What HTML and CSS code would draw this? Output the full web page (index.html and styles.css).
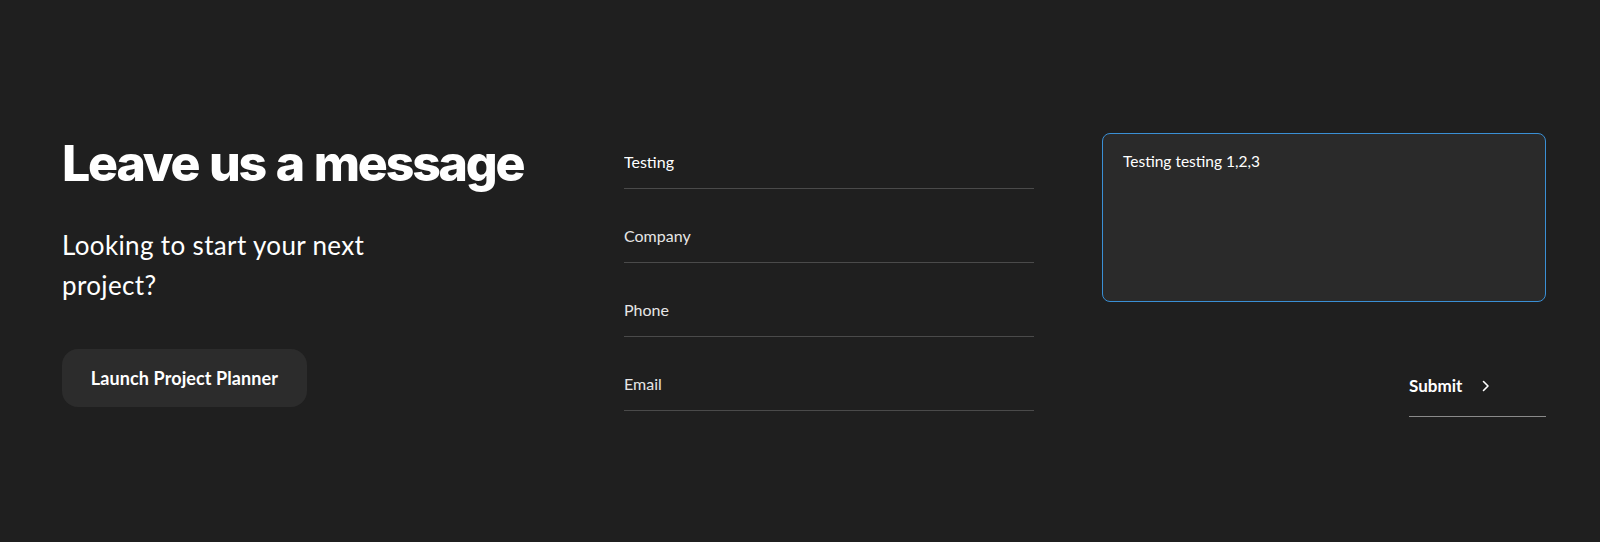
FILE: index.html
```
<!DOCTYPE html>
<html lang="en">
<head>
    <meta charset="UTF-8">
    <meta name="viewport" content="width=device-width, initial-scale=1.0">
    <title>Contact</title>
    <link rel="stylesheet" href="styles.css">
</head>
<body>
    <section class="contact">
        <div class="intro">
            <h1>Leave us a message</h1>
            <p>Looking to start your next<br>project?</p>
            <button class="planner">Launch Project Planner</button>
        </div>
        <form class="fields">
            <input type="text" value="Testing" placeholder="Name">
            <input type="text" placeholder="Company">
            <input type="text" placeholder="Phone">
            <input type="email" placeholder="Email">
        </form>
        <div class="message">
            <textarea placeholder="Message">Testing testing 1,2,3</textarea>
            <button class="submit">Submit
                <svg width="8" height="12" viewBox="0 0 8 12"><path d="M1.5 1.5 L6 6 L1.5 10.5" fill="none" stroke="#fff" stroke-width="1.6" stroke-linecap="round" stroke-linejoin="round"/></svg>
            </button>
        </div>
    </section>
</body>
</html>
```
FILE: styles.css
```
* {
    box-sizing: border-box;
}
body {
    margin: 0;
    background-color: #1f1f1f;
    color: #fff;
    font-family: Lato, "Noto Sans", sans-serif;
}
.contact {
    display: grid;
    grid-template-columns: 494px 410px 444px;
    column-gap: 68px;
    align-items: start;
    padding: 133px 54px 0 62px;
    height: 542px;
}
.intro h1 {
    margin: 0;
    font-family: Inter, sans-serif;
    font-size: 50px;
    font-weight: 800;
    letter-spacing: -2.2px;
    word-spacing: 2px;
    line-height: 60px;
}
.intro p {
    margin: 32px 0 0;
    font-size: 26px;
    letter-spacing: 0.35px;
    line-height: 40px;
}
.planner {
    margin-top: 44px;
    width: 245px;
    height: 58px;
    background: #2c2c2c;
    color: #fff;
    border: none;
    border-radius: 16px;
    font-family: Lato, sans-serif;
    font-size: 18px;
    font-weight: 700;
    letter-spacing: 0.1px;
    cursor: pointer;
}
.fields {
    display: flex;
    flex-direction: column;
    gap: 19px;
    margin-top: 1px;
}
.fields input {
    height: 55px;
    padding: 0;
    background: none;
    border: none;
    border-bottom: 1px solid #4a4a4a;
    color: #fff;
    font-family: Lato, sans-serif;
    font-size: 16px;
    outline: none;
}
.fields input::placeholder {
    color: #e6e6e6;
}
.message {
    display: flex;
    flex-direction: column;
    align-items: flex-end;
}
.message textarea {
    width: 100%;
    height: 169px;
    padding: 18px 20px;
    background: #2a2a2a;
    border: 1px solid #3a8fd4;
    border-radius: 8px;
    color: #fff;
    font-family: Lato, sans-serif;
    font-size: 15.5px;
    resize: none;
    outline: none;
}
.submit {
    display: flex;
    align-items: center;
    gap: 20px;
    margin-top: 65px;
    width: 137px;
    height: 50px;
    padding: 0 0 12px;
    background: none;
    border: none;
    border-bottom: 1px solid #8a8a8a;
    color: #fff;
    font-family: Lato, sans-serif;
    font-size: 17px;
    font-weight: 700;
    cursor: pointer;
}
```
